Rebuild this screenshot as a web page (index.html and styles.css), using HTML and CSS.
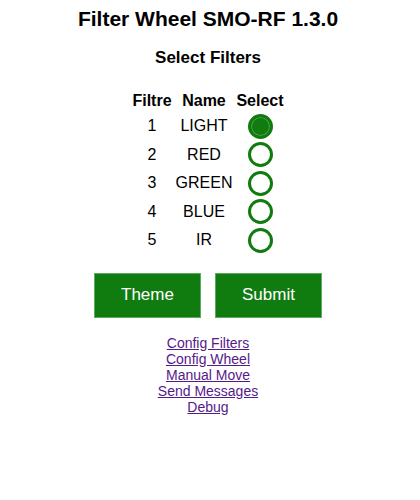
FILE: index.html
```html
<!DOCTYPE html>
<html>
<head>
<meta charset="utf-8">
<link rel="stylesheet" href="styles.css">
</head>
<body>
<div class="page">
  <h1 class="title">Filter Wheel SMO-RF 1.3.0</h1>
  <h2 class="subtitle">Select Filters</h2>
  <table class="filters">
    <thead>
      <tr><th>Filtre</th><th>Name</th><th>Select</th></tr>
    </thead>
    <tbody>
      <tr><td>1</td><td>LIGHT</td><td><span class="radio checked"></span></td></tr>
      <tr><td>2</td><td>RED</td><td><span class="radio"></span></td></tr>
      <tr><td>3</td><td>GREEN</td><td><span class="radio"></span></td></tr>
      <tr><td>4</td><td>BLUE</td><td><span class="radio"></span></td></tr>
      <tr><td>5</td><td>IR</td><td><span class="radio"></span></td></tr>
    </tbody>
  </table>
  <div class="buttons">
    <button class="btn">Theme</button>
    <button class="btn">Submit</button>
  </div>
  <nav class="links">
    <a href="#">Config Filters</a>
    <a href="#">Config Wheel</a>
    <a href="#">Manual Move</a>
    <a href="#">Send Messages</a>
    <a href="#">Debug</a>
  </nav>
</div>
</body>
</html>
```
FILE: styles.css
```css
html, body {
  margin: 0;
  padding: 0;
  background: #ffffff;
}
body {
  font-family: "Liberation Sans", Arial, sans-serif;
  color: #000;
}
.page {
  display: flex;
  flex-direction: column;
  align-items: center;
  padding-top: 7px;
  padding-right: 4px;
}
.title {
  font-size: 21px;
  font-weight: bold;
  margin: 0;
  line-height: 24px;
}
.subtitle {
  font-size: 17px;
  font-weight: bold;
  margin: 17px 0 0 0;
  line-height: 20px;
}
.filters {
  margin-top: 24px;
  border-collapse: separate;
  border-spacing: 2px 0;
  font-size: 16px;
}
.filters th {
  font-weight: bold;
  padding: 0 1px;
  height: 20px;
  line-height: 18px;
  vertical-align: top;
}
.filters td {
  text-align: center;
  height: 28.5px;
  padding: 0 1px;
  vertical-align: middle;
}
.radio {
  display: block;
  margin: 0 auto;
  width: 25px;
  height: 25px;
  box-sizing: border-box;
  border-radius: 50%;
  border: 3px solid #107c10;
  background: #fff;
}
.radio.checked {
  background: #107c10;
  border: 3px solid #107c10;
  box-shadow: inset 0 0 0 1px #55a055;
}
.buttons {
  display: flex;
  gap: 14px;
  margin-top: 18px;
}
.btn {
  width: 107px;
  height: 45px;
  background: #107c10;
  color: #fff;
  border: 1px solid #5fa85f;
  font-family: "Liberation Sans", Arial, sans-serif;
  font-size: 17px;
  padding: 0;
}
.links {
  display: flex;
  flex-direction: column;
  align-items: center;
  margin-top: 17px;
  font-size: 14px;
  line-height: 16px;
}
.links a {
  color: #551a8b;
  text-decoration: underline;
}
```
